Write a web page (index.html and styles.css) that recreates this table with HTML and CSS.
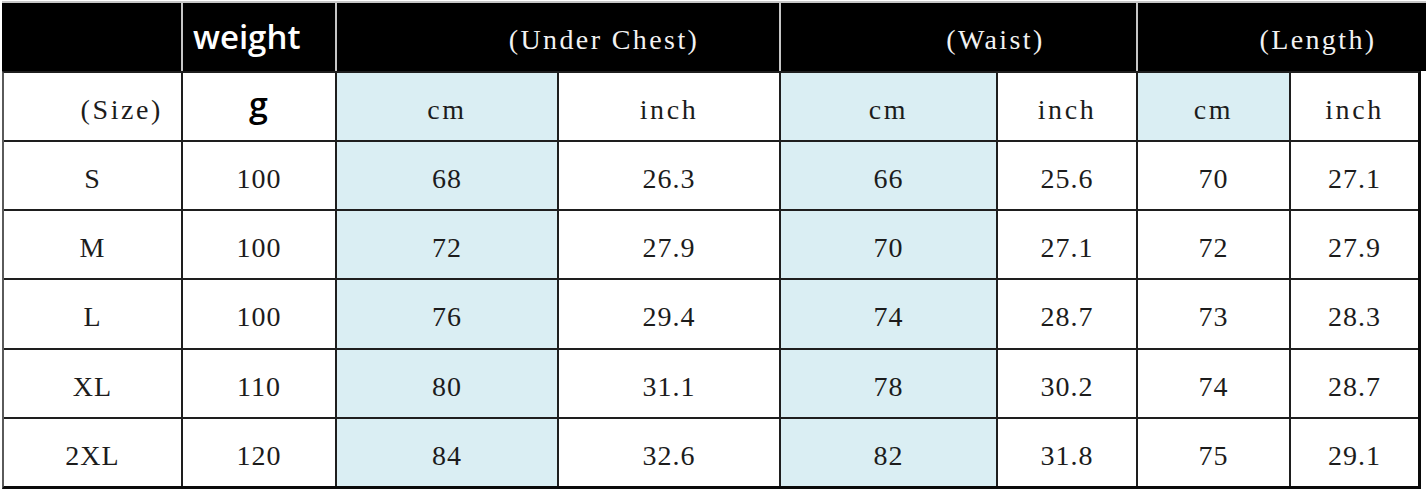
FILE: index.html
```html
<!DOCTYPE html>
<html>
<head>
<meta charset="utf-8">
<link rel="stylesheet" href="styles.css">
</head>
<body>
<div class="sheet">
  <div class="head">
    <div class="hc"></div>
    <div class="hc weight">weight</div>
    <div class="hc label chest">(Under Chest)</div>
    <div class="hc label waist">(Waist)</div>
    <div class="hc label length">(Length)</div>
  </div>
  <div class="grid">
    <div class="c word size">(Size)</div>
    <div class="c unit-g">g</div>
    <div class="c word blue">cm</div>
    <div class="c word">inch</div>
    <div class="c word blue">cm</div>
    <div class="c word">inch</div>
    <div class="c word blue">cm</div>
    <div class="c word">inch</div>

    <div class="c">S</div><div class="c">100</div><div class="c blue">68</div><div class="c">26.3</div><div class="c blue">66</div><div class="c">25.6</div><div class="c">70</div><div class="c">27.1</div>
    <div class="c">M</div><div class="c">100</div><div class="c blue">72</div><div class="c">27.9</div><div class="c blue">70</div><div class="c">27.1</div><div class="c">72</div><div class="c">27.9</div>
    <div class="c">L</div><div class="c">100</div><div class="c blue">76</div><div class="c">29.4</div><div class="c blue">74</div><div class="c">28.7</div><div class="c">73</div><div class="c">28.3</div>
    <div class="c">XL</div><div class="c">110</div><div class="c blue">80</div><div class="c">31.1</div><div class="c blue">78</div><div class="c">30.2</div><div class="c">74</div><div class="c">28.7</div>
    <div class="c">2XL</div><div class="c">120</div><div class="c blue">84</div><div class="c">32.6</div><div class="c blue">82</div><div class="c">31.8</div><div class="c">75</div><div class="c">29.1</div>
  </div>
</div>
</body>
</html>
```

FILE: styles.css
```css
html, body {
  margin: 0;
  padding: 0;
  background: #ffffff;
}

.sheet {
  padding-top: 1px;
  width: 1426px;
  font-family: "Liberation Serif", "Times New Roman", serif;
  font-size: 28px;
  color: #1c1c1c;
}

.head {
  margin-left: 2px;
  display: grid;
  grid-template-columns: 179px 152px 442px 355px 1fr;
  grid-template-rows: 68px;
  column-gap: 2px;
  background: #c6c6c6;
  border-top: 2px solid #c6c6c6;
}

.hc {
  background: #000000;
  color: #f2f2f2;
  display: flex;
  align-items: center;
  justify-content: center;
}

.hc.weight {
  justify-content: flex-start;
  padding-left: 10px;
  font-family: "Open Sans", "Noto Sans", sans-serif;
  font-size: 33px;
  font-weight: 600;
  color: #ffffff;
  padding-bottom: 2px;
}

.hc.label {
  letter-spacing: 2.4px;
  padding-top: 5px;
}

.hc.chest { padding-left: 92px; }
.hc.waist { padding-left: 74px; }
.hc.length { padding-left: 72px; }

.grid {
  margin-left: 2px;
  width: 1414px;
  display: grid;
  grid-template-columns: 177px 152px 220px 220px 215px 138px 151px 127px;
  grid-template-rows: 67px 67px 67px 68px 67px 67px;
  gap: 2px;
  background: #1e1e1e;
  border-top: 2px solid #1e1e1e;
  border-left: 2px solid #5a5a5a;
  border-right: 3px solid #0a0a0a;
  border-bottom: 3px solid #0a0a0a;
}

.c {
  background: #ffffff;
  display: flex;
  align-items: center;
  justify-content: center;
  padding-top: 6px;
  letter-spacing: 1px;
}

.c.blue {
  background: #daeef3;
}

.c.word {
  letter-spacing: 2.6px;
}

.c.size {
  justify-content: flex-end;
  padding-right: 18px;
}

.c.unit-g {
  font-family: "Open Sans", "Noto Sans", sans-serif;
  font-size: 34px;
  font-weight: 600;
  color: #000000;
  padding-top: 0;
  padding-bottom: 6px;
}
```
